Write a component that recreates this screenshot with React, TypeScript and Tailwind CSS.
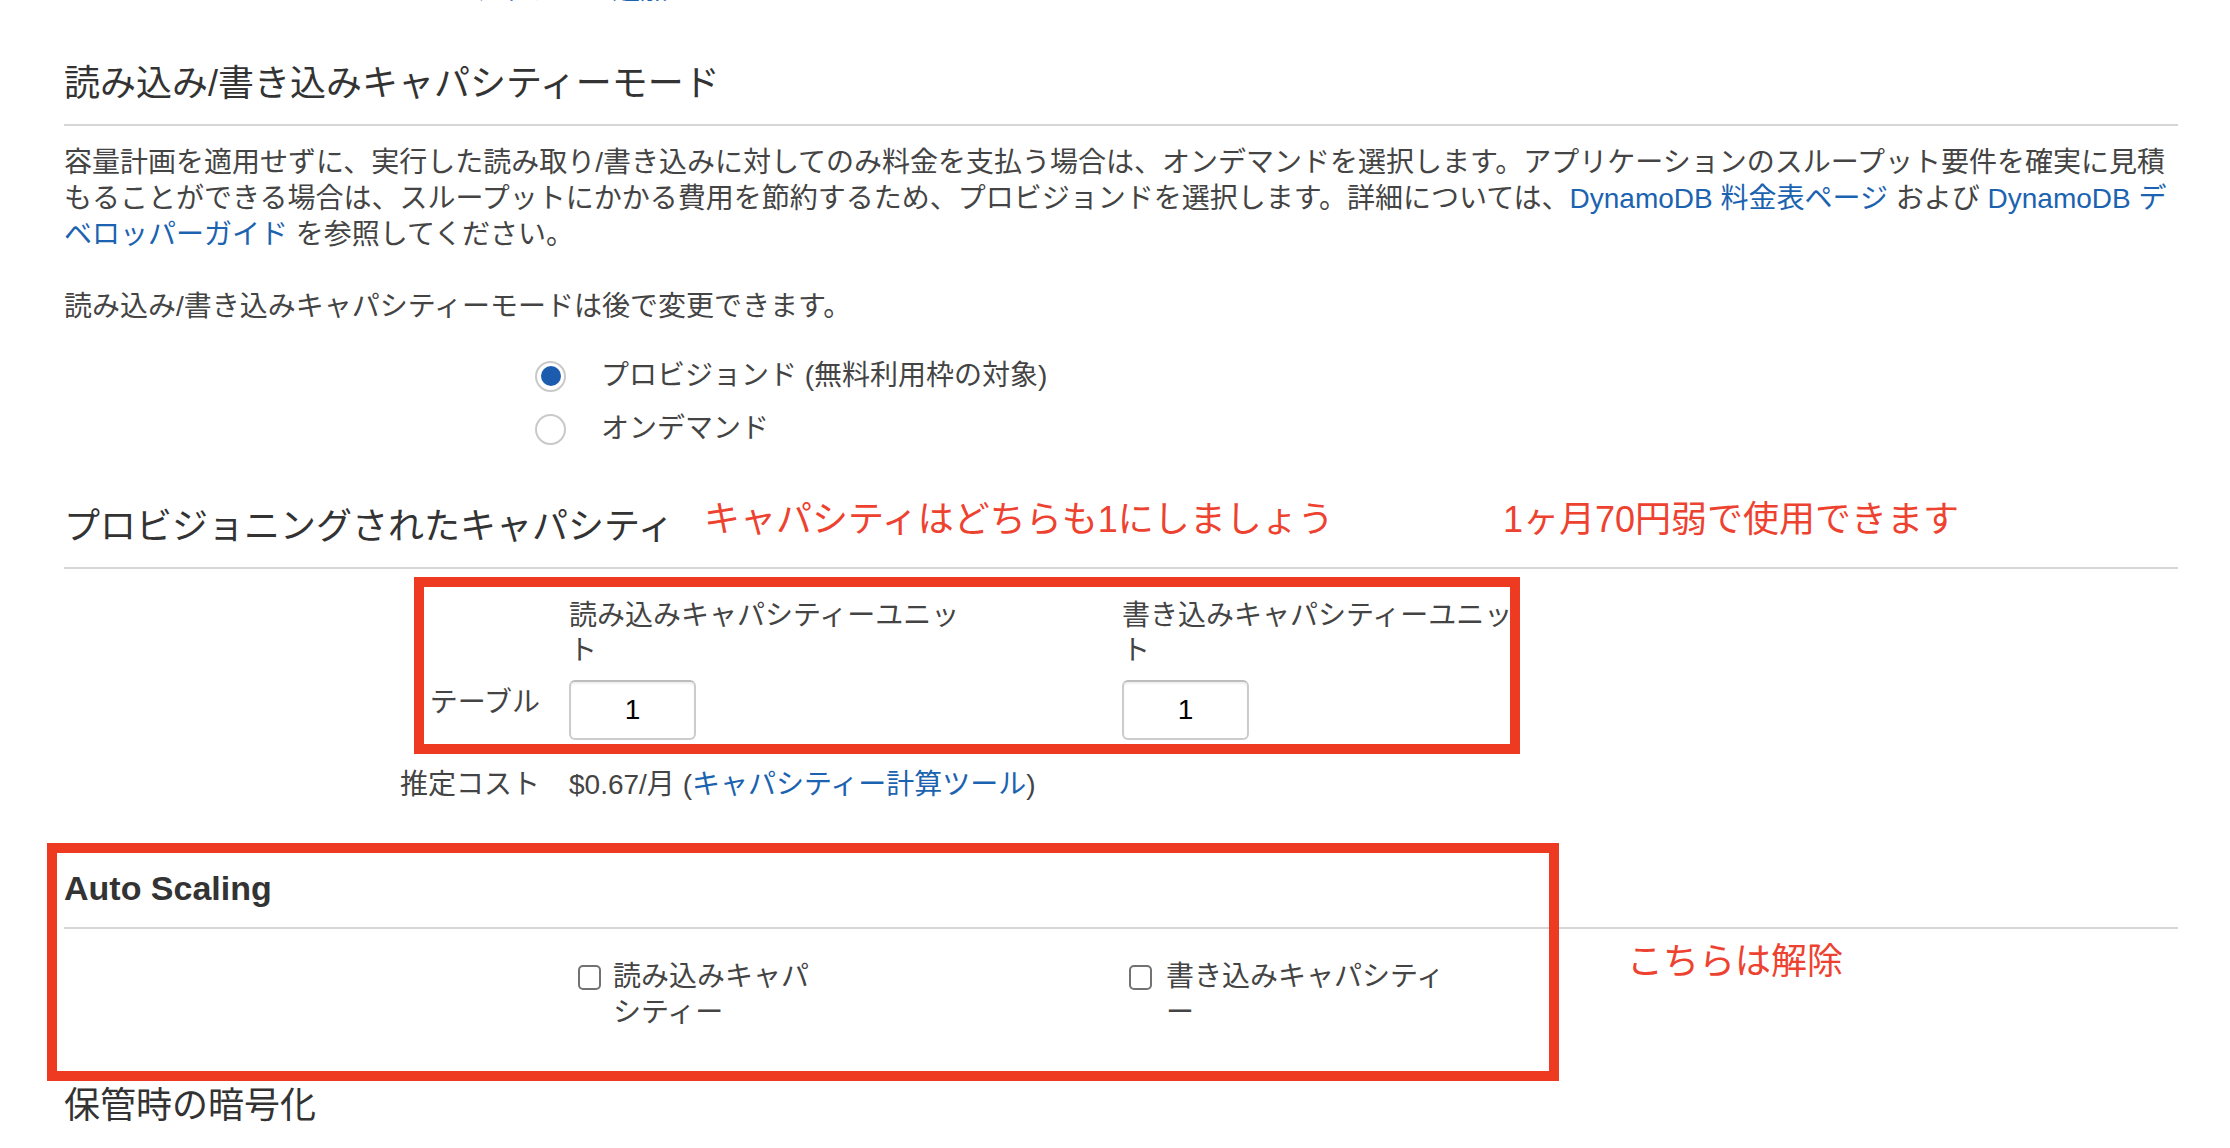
import React from 'react';

const link = 'text-[#1b63b0]';
const redText = 'text-[#ee4230]';
const redBox = 'absolute border-[10px] border-[#ef3a22] pointer-events-none';

const Radio: React.FC<{ checked?: boolean }> = ({ checked }) => (
  <span className="flex h-[31px] w-[31px] shrink-0 items-center justify-center rounded-full border-2 border-[#c9c9c9] bg-white">
    {checked && <span className="h-[20px] w-[20px] rounded-full bg-[#1c5caf]" />}
  </span>
);

const Checkbox: React.FC = () => (
  <span className="mt-[6px] block h-[25px] w-[23px] shrink-0 rounded-[5px] border-2 border-[#727272] bg-white" />
);

const NumberBox: React.FC<{ value: string }> = ({ value }) => (
  <div className="flex h-[60px] w-[127px] items-center justify-center rounded-[6px] border-2 border-[#cccccc] border-t-[#bdbdbd] bg-white text-[28px] text-black shadow-[inset_0_2px_2px_rgba(0,0,0,0.06)]">
    {value}
  </div>
);

export default function App() {
  return (
    <div className="relative min-h-[1148px] w-full overflow-hidden bg-white font-['Liberation_Sans','Noto_Sans_CJK_JP',sans-serif] text-[#444]">
      <div className="pl-[64px] pr-[52px]">
        {/* clipped link from the section above */}
        <div className="h-[4px] overflow-hidden">
          <span className={`-mt-[28px] ml-[353px] block text-[28px] leading-[36px] ${link}`}>インデックスの追加</span>
        </div>

        <h2 className="mt-[60px] border-b-2 border-[#d6d6d6] pb-[20px] text-[36px] leading-[40px] text-[#333]">
          読み込み/書き込みキャパシティーモード
        </h2>

        <p className="mt-[19px] whitespace-nowrap text-[28px] leading-[36px]">
          容量計画を適用せずに、実行した読み取り/書き込みに対してのみ料金を支払う場合は、オンデマンドを選択します。アプリケーションのスループット要件を確実に見積
          <br />
          もることができる場合は、スループットにかかる費用を節約するため、プロビジョンドを選択します。詳細については、
          <span className={link}>DynamoDB 料金表ページ</span> および <span className={link}>DynamoDB デ</span>
          <br />
          <span className={link}>ベロッパーガイド</span> を参照してください。
        </p>

        <p className="mt-[36px] text-[28px] leading-[36px]">読み込み/書き込みキャパシティーモードは後で変更できます。</p>

        <div className="ml-[471px] mt-[33px] flex flex-col gap-[17px] text-[28px]">
          <label className="flex h-[36px] items-center gap-[35px]">
            <Radio checked />
            <span>プロビジョンド (無料利用枠の対象)</span>
          </label>
          <label className="flex h-[36px] items-center gap-[35px]">
            <Radio />
            <span>オンデマンド</span>
          </label>
        </div>

        <div className="mt-[60px] flex h-[62px] items-start border-b-2 border-[#d6d6d6]">
          <div className="flex h-[40px] items-center">
            <span className="w-[640px] text-[36px] leading-[40px] text-[#333]">プロビジョニングされたキャパシティ</span>
            <span className={`mb-[14px] w-[799px] text-[36px] leading-[40px] ${redText}`}>キャパシティはどちらも1にしましょう</span>
            <span className={`mb-[14px] text-[36px] leading-[40px] ${redText}`}>1ヶ月70円弱で使用できます</span>
          </div>
        </div>

        <div className="mt-[29px] grid grid-cols-[476px_524px_420px] gap-x-[29px] text-[28px]">
          <div />
          <div className="w-[400px] leading-[35px]">読み込みキャパシティーユニット</div>
          <div className="w-[400px] leading-[35px]">書き込みキャパシティーユニット</div>

          <div className="mt-[12px] pt-[5px] text-right leading-[36px]">テーブル</div>
          <div className="mt-[12px]">
            <NumberBox value="1" />
          </div>
          <div className="mt-[12px]">
            <NumberBox value="1" />
          </div>

          <div className="mt-[27px] text-right leading-[36px]">推定コスト</div>
          <div className="col-span-2 mt-[27px] whitespace-nowrap leading-[36px]">
            $0.67/月 (<span className={link}>キャパシティー計算ツール</span>)
          </div>
        </div>

        <h3 className="mt-[65px] border-b-2 border-[#d6d6d6] pb-[19px] text-[34px] font-bold leading-[40px] text-[#333]">
          Auto Scaling
        </h3>

        <div className="mt-[30px] flex pl-[514px] text-[28px] leading-[36px]">
          <label className="flex w-[551px] items-start gap-[12px]">
            <Checkbox />
            <span className="w-[210px]">読み込みキャパシティー</span>
          </label>
          <label className="flex items-start gap-[14px]">
            <Checkbox />
            <span className="w-[290px]">書き込みキャパシティー</span>
          </label>
        </div>

        <h2 className="mt-[55px] text-[36px] leading-[40px] text-[#333]">保管時の暗号化</h2>
      </div>

      {/* annotations */}
      <div className={`${redBox} left-[414px] top-[577px] h-[177px] w-[1106px]`} />
      <div className={`${redBox} left-[47px] top-[843px] h-[238px] w-[1512px]`} />
      <span className={`absolute left-[1627px] top-[942px] text-[36px] leading-[40px] ${redText}`}>こちらは解除</span>
    </div>
  );
}
